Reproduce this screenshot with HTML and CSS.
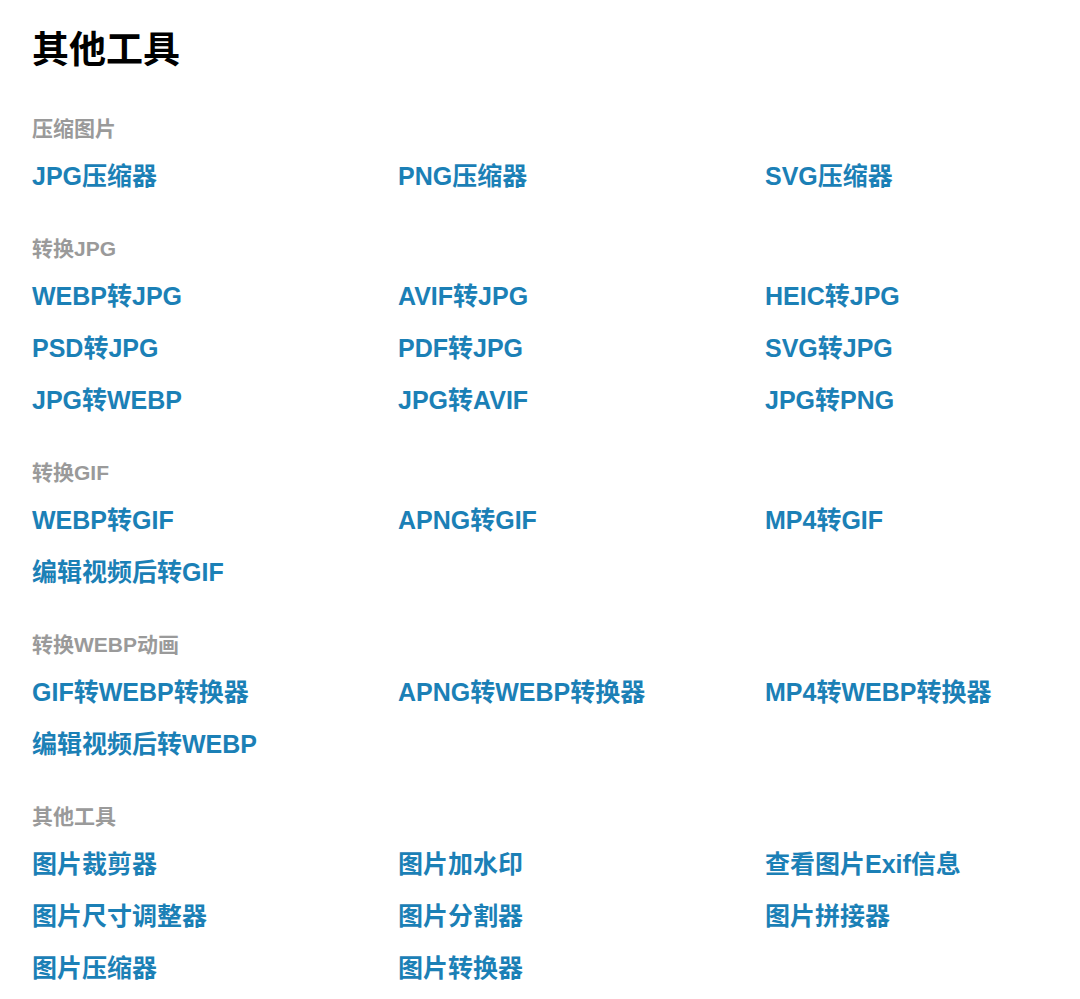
FILE: index.html
```html
<!DOCTYPE html>
<html lang="zh-CN">
<head>
<meta charset="utf-8">
<title>其他工具</title>
<link rel="stylesheet" href="styles.css">
</head>
<body>
<main class="page">
  <h1 class="title">其他工具</h1>

  <section class="group">
    <h2 class="label">压缩图片</h2>
    <div class="links">
      <a href="#">JPG压缩器</a>
      <a href="#">PNG压缩器</a>
      <a href="#">SVG压缩器</a>
    </div>
  </section>

  <section class="group">
    <h2 class="label">转换JPG</h2>
    <div class="links">
      <a href="#">WEBP转JPG</a>
      <a href="#">AVIF转JPG</a>
      <a href="#">HEIC转JPG</a>
      <a href="#">PSD转JPG</a>
      <a href="#">PDF转JPG</a>
      <a href="#">SVG转JPG</a>
      <a href="#">JPG转WEBP</a>
      <a href="#">JPG转AVIF</a>
      <a href="#">JPG转PNG</a>
    </div>
  </section>

  <section class="group">
    <h2 class="label">转换GIF</h2>
    <div class="links">
      <a href="#">WEBP转GIF</a>
      <a href="#">APNG转GIF</a>
      <a href="#">MP4转GIF</a>
      <a href="#">编辑视频后转GIF</a>
    </div>
  </section>

  <section class="group">
    <h2 class="label">转换WEBP动画</h2>
    <div class="links">
      <a href="#">GIF转WEBP转换器</a>
      <a href="#">APNG转WEBP转换器</a>
      <a href="#">MP4转WEBP转换器</a>
      <a href="#">编辑视频后转WEBP</a>
    </div>
  </section>

  <section class="group">
    <h2 class="label">其他工具</h2>
    <div class="links">
      <a href="#">图片裁剪器</a>
      <a href="#">图片加水印</a>
      <a href="#">查看图片Exif信息</a>
      <a href="#">图片尺寸调整器</a>
      <a href="#">图片分割器</a>
      <a href="#">图片拼接器</a>
      <a href="#">图片压缩器</a>
      <a href="#">图片转换器</a>
    </div>
  </section>
</main>
</body>
</html>
```

FILE: styles.css
```css
html, body {
  margin: 0;
  padding: 0;
  background: #ffffff;
}

body {
  font-family: "Liberation Sans", "Noto Sans CJK SC", sans-serif;
}

.page {
  padding: 23px 32px 0 32px;
}

.title {
  margin: 0;
  font-size: 37px;
  line-height: 56px;
  font-weight: 700;
  color: #000000;
}

.group {
  margin-top: 36px;
}

.group + .group {
  margin-top: 43px;
}

.label {
  margin: 0;
  font-size: 21px;
  line-height: 28px;
  font-weight: 700;
  color: #9a9a9a;
}

.links {
  margin-top: 17px;
  display: grid;
  grid-template-columns: 366px 367px 1fr;
  row-gap: 20px;
}

.links a {
  font-size: 25px;
  line-height: 32px;
  font-weight: 700;
  color: #1b80b6;
  text-decoration: none;
  white-space: nowrap;
}
```
